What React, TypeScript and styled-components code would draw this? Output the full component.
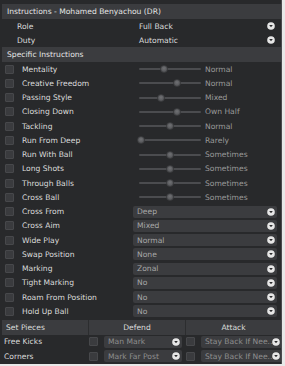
import styled, { createGlobalStyle } from "styled-components";

// Page-level reset
const GlobalStyle = createGlobalStyle`
  html, body {
    margin: 0;
    padding: 0;
    background: #e8e8e8;
  }
  * {
    box-sizing: border-box;
  }
`;

interface SliderItem {
  label: string;
  value: string;
  pos: number; // 0..1 thumb position
}

interface DropItem {
  label: string;
  value: string;
}

const sliders: SliderItem[] = [
  { label: "Mentality", value: "Normal", pos: 0.4 },
  { label: "Creative Freedom", value: "Normal", pos: 0.62 },
  { label: "Passing Style", value: "Mixed", pos: 0.35 },
  { label: "Closing Down", value: "Own Half", pos: 0.62 },
  { label: "Tackling", value: "Normal", pos: 0.5 },
  { label: "Run From Deep", value: "Rarely", pos: 0.04 },
  { label: "Run With Ball", value: "Sometimes", pos: 0.5 },
  { label: "Long Shots", value: "Sometimes", pos: 0.5 },
  { label: "Through Balls", value: "Sometimes", pos: 0.5 },
  { label: "Cross Ball", value: "Sometimes", pos: 0.5 },
];

const drops: DropItem[] = [
  { label: "Cross From", value: "Deep" },
  { label: "Cross Aim", value: "Mixed" },
  { label: "Wide Play", value: "Normal" },
  { label: "Swap Position", value: "None" },
  { label: "Marking", value: "Zonal" },
  { label: "Tight Marking", value: "No" },
  { label: "Roam From Position", value: "No" },
  { label: "Hold Up Ball", value: "No" },
];

/**
 * Small white circle with a down arrow, used by every drop-down
 */
const Arrow = () => (
  <ArrowSvg viewBox="0 0 8 8" width="8" height="8">
    <circle cx="4" cy="4" r="3.8" fill="#e6e6e6" />
    <path d="M2.2 3.1 L5.8 3.1 L4 5.3 Z" fill="#2a2b2d" />
  </ArrowSvg>
);

const App = () => {
  return (
    <>
      <GlobalStyle />
      <Panel>
        {/* Player header */}
        <Bar>Instructions - Mohamed Benyachou (DR)</Bar>
        <TopRow>
          <TopLabel>Role</TopLabel>
          <TopValue>
            <span>Full Back</span>
            <Arrow />
          </TopValue>
        </TopRow>
        <TopRow>
          <TopLabel>Duty</TopLabel>
          <TopValue>
            <span>Automatic</span>
            <Arrow />
          </TopValue>
        </TopRow>

        {/* Specific instructions */}
        <Bar>Specific Instructions</Bar>
        <List>
          {sliders.map((s) => (
            <Row key={s.label}>
              <Check />
              <Label>{s.label}</Label>
              <Track>
                <Thumb style={{ left: `${s.pos * 100}%` }} />
              </Track>
              <Value>{s.value}</Value>
            </Row>
          ))}
          {drops.map((d) => (
            <Row key={d.label}>
              <Check />
              <Label>{d.label}</Label>
              <Select>
                <span>{d.value}</span>
                <Arrow />
              </Select>
            </Row>
          ))}
        </List>

        {/* Set pieces table */}
        <SetHead>
          <HeadCell>Set Pieces</HeadCell>
          <HeadCell $center>Defend</HeadCell>
          <HeadCell $center>Attack</HeadCell>
        </SetHead>
        <SetRow>
          <SetLabel>Free Kicks</SetLabel>
          <SetCell>
            <Check />
            <Select $dim>
              <span>Man Mark</span>
              <Arrow />
            </Select>
          </SetCell>
          <SetCell>
            <Check />
            <Select $dim>
              <span>Stay Back If Nee..</span>
              <Arrow />
            </Select>
          </SetCell>
        </SetRow>
        <SetRow>
          <SetLabel>Corners</SetLabel>
          <SetCell>
            <Check />
            <Select $dim>
              <span>Mark Far Post</span>
              <Arrow />
            </Select>
          </SetCell>
          <SetCell>
            <Check />
            <Select $dim>
              <span>Stay Back If Nee..</span>
              <Arrow />
            </Select>
          </SetCell>
        </SetRow>
      </Panel>
    </>
  );
};

const Panel = styled.div`
  width: 282px;
  height: 364px;
  background: #28292b;
  border-right: 1px solid #4a4b4e;
  padding: 4px 0 0 2px;
  font-family: "DejaVu Sans", "Noto Sans", sans-serif;
  font-size: 7.6px;
  color: #dcdcdc;
  display: flex;
  flex-direction: column;
  overflow: hidden;
`;

const Bar = styled.div`
  height: 15px;
  display: flex;
  align-items: center;
  padding-left: 5px;
  background: #3b3c3f;
  color: #e4e4e4;
`;

const TopRow = styled.div`
  height: 14px;
  display: flex;
  align-items: center;
`;

const TopLabel = styled.div`
  width: 137px;
  padding-left: 15px;
`;

const TopValue = styled.div`
  flex: 1;
  display: flex;
  align-items: center;
  justify-content: space-between;
  padding-right: 6px;
`;

const List = styled.div`
  display: flex;
  flex-direction: column;
`;

const Row = styled.div`
  height: 14.25px;
  display: flex;
  align-items: center;
  padding-left: 3px;
`;

const Check = styled.div`
  width: 9px;
  height: 9px;
  flex: none;
  background: #3a3b3e;
  border: 1px solid #47484b;
  border-radius: 1px;
`;

const Label = styled.div`
  width: 119px;
  padding-left: 8px;
  white-space: nowrap;
`;

const Track = styled.div`
  position: relative;
  width: 62px;
  height: 2px;
  margin-left: 6px;
  background: #4b4c4f;
  border-radius: 1px;
`;

const Thumb = styled.div`
  position: absolute;
  top: -3px;
  width: 8px;
  height: 8px;
  margin-left: -4px;
  border-radius: 50%;
  background: radial-gradient(circle at 50% 40%, #707174, #4a4b4e);
  border: 1px solid #3a3b3d;
`;

const Value = styled.div`
  padding-left: 4px;
  color: #9a9a9a;
`;

const Select = styled.div<{ $dim?: boolean }>`
  flex: 1;
  height: 12px;
  margin-right: 4px;
  display: flex;
  align-items: center;
  justify-content: space-between;
  padding: 0 2px 0 4px;
  background: #3b3c3f;
  border-radius: 2px;
  color: ${({ $dim }) => ($dim ? "#8e8e8e" : "#a8a8a8")};
  white-space: nowrap;
  overflow: hidden;
`;

const ArrowSvg = styled.svg`
  flex: none;
  display: block;
`;

const SetHead = styled.div`
  margin-top: 1px;
  height: 15px;
  display: grid;
  grid-template-columns: 86px 97px 1fr;
  background: #3b3c3f;
`;

const HeadCell = styled.div<{ $center?: boolean }>`
  display: flex;
  align-items: center;
  justify-content: ${({ $center }) => ($center ? "center" : "flex-start")};
  padding-left: ${({ $center }) => ($center ? "0" : "4px")};
  border-left: ${({ $center }) => ($center ? "1px solid #2c2d2f" : "none")};
`;

const SetRow = styled.div`
  height: 14.5px;
  display: grid;
  grid-template-columns: 86px 97px 1fr;
  align-items: center;
`;

const SetLabel = styled.div`
  padding-left: 2px;
`;

const SetCell = styled.div`
  display: flex;
  align-items: center;
  gap: 6px;
  padding-left: 1px;
  & > ${Select} {
    margin-right: 3px;
  }
`;

export default App;
